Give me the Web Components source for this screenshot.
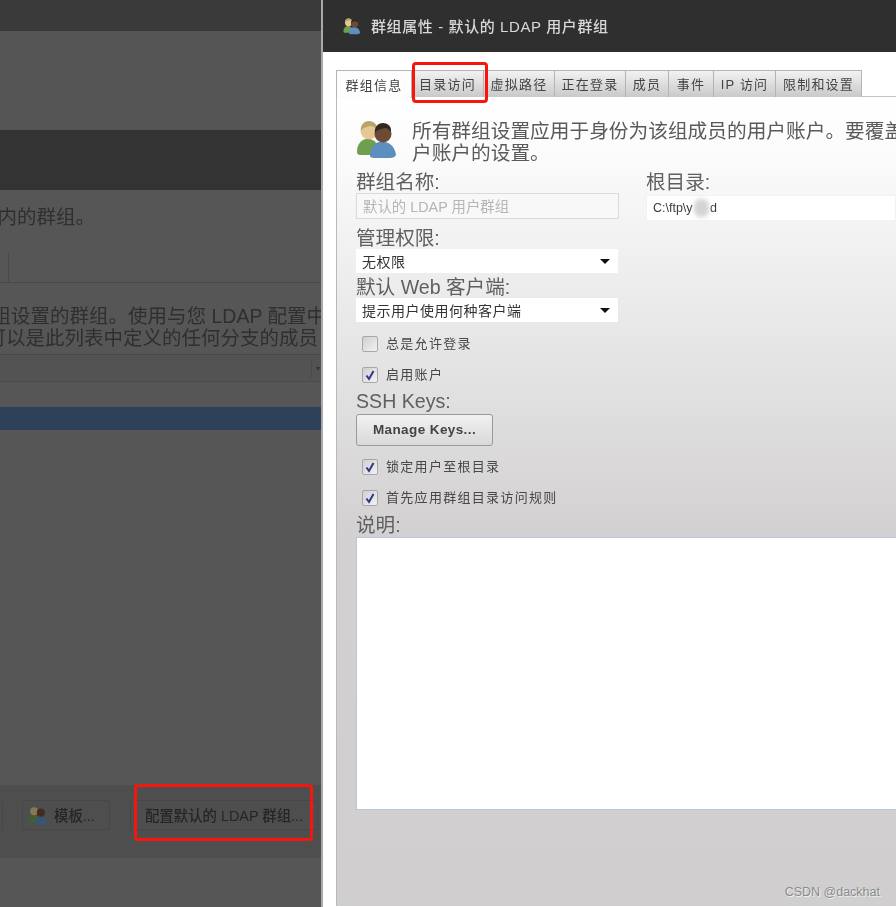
<!DOCTYPE html>
<html lang="zh"><head><meta charset="utf-8"><title>群组属性</title>
<style>
html,body{margin:0;padding:0;width:896px;height:907px;overflow:hidden;background:#555}
body{font-family:"Liberation Sans","Noto Sans CJK SC",sans-serif}
</style></head><body>
<app-shell></app-shell>
<script>
const FONT='"Liberation Sans","Noto Sans CJK SC",sans-serif';
function def(name,html){
  customElements.define(name,class extends HTMLElement{
    connectedCallback(){
      if(this.shadowRoot)return;
      const r=this.attachShadow({mode:'open'});
      r.innerHTML=typeof html==='function'?html(this):html;
    }
  });
}
const people=`<svg viewBox="0 0 42 38" width="100%" height="100%" style="display:block">
<path d="M1 32c0-8 4-12 9-13l4 0c4 1 6 3 7 6l-3 10H5c-3 0-4-1-4-3z" fill="#6f9e4e"/>
<circle cx="13" cy="11" r="8.5" fill="#e6c796"/><path d="M5 11c-1-7 4-10 8-10s9 3 8 9c-2-3-4-4-7-4-3 1-7 1-9 5z" fill="#b9a56a"/>
<path d="M14 36c0-8 4-13 9-14h6c6 1 10 6 11 13-1 2-3 3-6 3H18c-2 0-4-1-4-2z" fill="#5c8fbf"/>
<circle cx="27" cy="14" r="8.5" fill="#6d4a33"/><path d="M19 13c-1-7 4-10 8-10s9 3 8 9c-2-2-3-4-6-4-3 1-8 1-10 5z" fill="#33281f"/>
</svg>`;

def('dim-bar',h=>`<style>:host{display:block;height:${h.getAttribute('h')}px;background:${h.getAttribute('c')}}</style>`);

def('dim-text',h=>`<style>
:host{display:flex;justify-content:flex-end;height:${h.getAttribute('h')||22}px;line-height:${h.getAttribute('h')||22}px;padding-right:${h.getAttribute('pr')||0}px;overflow:hidden;white-space:nowrap;font-size:19.5px;color:#2f2f2f;font-family:${FONT}}
span{filter:blur(.6px);flex:none;margin-right:${h.getAttribute('mr')||0}px}
</style><span><slot></slot></span>`);

def('dim-button',h=>`<style>
:host{display:flex;align-items:center;justify-content:${h.hasAttribute('start')?'flex-start':'center'};gap:6px;box-sizing:border-box;width:${h.getAttribute('w')}px;height:30px;padding-left:${h.hasAttribute('start')?5:0}px;border:1px solid #474747;border-radius:3px;font-size:14.4px;font-weight:500;color:#252525;white-space:nowrap;font-family:${FONT}}
span{filter:blur(.6px);margin-top:-2px}
</style><slot name="icon"></slot><span><slot></slot></span>`);

def('left-pane',`<style>
:host{display:flex;flex-direction:column;width:321px;height:907px;background:#565656;overflow:hidden;flex:none}
.tabline{height:30px;display:flex;border-bottom:1px solid #484848;box-sizing:border-box}
.tabline i{display:block;width:8px;height:100%;border-right:1px solid #484848}
.sp{height:var(--h);flex:none}
.bar{display:flex;align-items:center;height:73px;background:#4e4e4e;padding-bottom:13px;box-sizing:border-box;flex:none}
.bar dim-button:first-child{margin-left:-60px;margin-right:19px}
.bar dim-button:nth-child(3){margin-left:20px}
.sel{height:26px;display:flex;justify-content:flex-end;align-items:center;border-top:1px solid #484848;border-bottom:1px solid #4c4c4c;background:#535353;font-size:8px;color:#333;padding-right:1px;flex:none}
.sel span{border-left:1px solid #4a4a4a;padding:5px 0 5px 4px}
</style>
<dim-bar h="31" c="#3a3a3a"></dim-bar>
<dim-bar h="99" c="#555555"></dim-bar>
<dim-bar h="60" c="#333333"></dim-bar>
<div class="sp" style="--h:15px"></div>
<dim-text h="24" pr="226">内的群组。</dim-text>
<div class="sp" style="--h:24px"></div>
<div class="tabline"><i></i></div>
<div class="sp" style="--h:22px"></div>
<dim-text h="22" mr="-5">组设置的群组。使用与您 LDAP 配置中</dim-text>
<dim-text h="22" mr="3">可以是此列表中定义的任何分支的成员</dim-text>
<div class="sp" style="--h:5px"></div>
<div class="sel"><span>▾</span></div>
<div class="sp" style="--h:25px"></div>
<dim-bar h="23" c="#2d4159"></dim-bar>
<div class="sp" style="--h:355px"></div>
<div class="bar">
  <dim-button w="63"></dim-button>
  <dim-button w="88" start><svg slot="icon" width="20" height="18" viewBox="0 0 42 38" style="filter:blur(.5px) brightness(.6)"><path d="M1 32c0-8 4-12 9-13h4c4 1 6 3 7 6l-3 10H5z" fill="#6f9e4e"/><circle cx="13" cy="11" r="8.5" fill="#e6c796"/><path d="M14 36c0-8 4-13 9-14h6c6 1 10 6 11 13l-6 3H18z" fill="#5c8fbf"/><circle cx="27" cy="14" r="8.5" fill="#6d4a33"/></svg>模板...</dim-button>
  <dim-button w="188">配置默认的 LDAP 群组...</dim-button>
</div>`);

def('dialog-title',`<style>
:host{display:flex;align-items:center;gap:10px;height:52px;background:#2f2f2f;padding-left:20px;color:#d8d8d8;font-size:15px;font-weight:500;font-family:${FONT};flex:none}
.i{width:18px;height:18px;display:block}
span{filter:blur(.5px);white-space:nowrap;letter-spacing:.6px;margin-top:-2px}
</style><div class="i">${people}</div><span><slot></slot></span>`);

def('tab-item',h=>`<style>
:host{display:flex;align-items:center;justify-content:center;box-sizing:border-box;width:${h.getAttribute('w')}px;height:27px;font-size:13px;letter-spacing:1.2px;color:#444;white-space:nowrap;border:1px solid #b4b4b4;border-bottom:0;border-left:0;background:linear-gradient(#f2f2f2,#c9c9c9);font-family:${FONT}}
:host([first]){border-left:1px solid #b4b4b4;background:#fdfdfd;height:28px;margin-bottom:-1px;position:relative;z-index:1}
span{filter:blur(.55px);margin-top:-1px}
</style><span><slot></slot></span>`);

def('tab-strip',`<style>:host{display:flex;height:27px;align-items:flex-start}</style><slot></slot>`);

def('field-label',`<style>
:host{display:flex;align-items:center;height:var(--lh,24px);font-size:19.6px;color:#606060;white-space:nowrap;font-family:${FONT}}
span{filter:blur(.5px);margin-top:var(--lm,-1px)}
</style><span><slot></slot></span>`);

def('text-box',h=>`<style>
:host{display:flex;align-items:center;box-sizing:border-box;height:${h.getAttribute('h')||26}px;padding-left:${h.getAttribute('pl')||6}px;background:${h.hasAttribute('disabled')?'#f8f8f8':'#fff'};border:1px solid ${h.hasAttribute('disabled')?'#dadada':'#f2f2f2'};font-size:14.4px;color:${h.hasAttribute('disabled')?'#b6b6b6':'#3c3c3c'};white-space:nowrap;font-family:${FONT};position:relative;overflow:hidden}
span{filter:blur(.5px);margin-top:-1px}
</style><span><slot></slot></span><slot name="over"></slot>`);

def('select-box',`<style>
:host{display:flex;align-items:center;justify-content:space-between;box-sizing:border-box;height:24px;padding:0 8px 0 6px;background:#fff;font-size:14px;letter-spacing:.5px;color:#333;white-space:nowrap;font-family:${FONT}}
span{filter:blur(.5px);margin-top:-1px}
i{display:block;width:0;height:0;border:5px solid transparent;border-top:5px solid #111;border-bottom:0}
</style><span><slot></slot></span><i></i>`);

def('check-row',h=>`<style>
:host{display:flex;align-items:center;gap:8px;height:31px;padding-left:6px;font-size:13px;letter-spacing:1.3px;color:#484848;white-space:nowrap;font-family:${FONT}}
.b{box-sizing:border-box;width:16px;height:16px;border:1px solid #a8a8a8;border-radius:2px;background:linear-gradient(135deg,#cfcfcf,#f3f3f3);display:block;filter:blur(.3px);flex:none}
span{filter:blur(.55px);margin-top:-2px}
svg{display:block}
</style><div class="b">${h.hasAttribute('checked')?'<svg viewBox="0 0 14 14" width="14" height="14"><path d="M3.5 7.5 6 11 10.5 3" fill="none" stroke="#33338f" stroke-width="2"/></svg>':''}</div><span><slot></slot></span>`);

def('push-button',`<style>
:host{display:flex;align-items:center;justify-content:center;box-sizing:border-box;width:137px;height:32px;border:1px solid #9a9a9a;border-radius:3px;background:linear-gradient(#f1f1f1,#d9d9d9);font-size:13.5px;font-weight:bold;letter-spacing:.4px;color:#444;font-family:${FONT}}
span{filter:blur(.5px);margin-top:-2px}
</style><span><slot></slot></span>`);

def('group-panel',`<style>
:host{display:block;box-sizing:border-box;height:810px;margin-top:-1px;padding:23px 0 0 19px;border-left:1px solid #b9b9b9;border-top:1px solid #c4c4c4;width:560px;background:linear-gradient(#ffffff 0,#fbfbfb 60px,#d2d0d0 440px,#d0cece 100%);overflow:hidden;font-family:${FONT}}
.intro{display:flex;height:44px;width:600px}
.ico{width:42px;height:38px;margin-right:14px;flex:none;filter:blur(.4px)}
.txt{font-size:19.7px;line-height:22px;color:#5a5a5a;white-space:nowrap;filter:blur(.45px)}
.two{display:flex;margin-top:5px}
.c1{width:263px;flex:none}.c2{margin-left:27px;width:300px}
.left{width:262px}
.sub{--lh:25px}
.ssh{--lh:24px}
.after{margin-top:5px}
.note{--lm:-3px}
.area{box-sizing:border-box;height:273px;width:600px;background:#fff;border:1px solid #b7c7da}
.smudge{position:absolute;left:47px;top:3px;width:15px;height:18px;background:#d4d4d4;border-radius:40%;filter:blur(2px)}
.chk1{margin-top:6px}
</style>
<div class="intro"><div class="ico">${people}</div><div class="txt">所有群组设置应用于身份为该组成员的用户账户。要覆盖<br>户账户的设置。</div></div>
<div class="two">
  <div class="c1"><field-label>群组名称:</field-label><text-box disabled>默认的 LDAP 用户群组</text-box></div>
  <div class="c2" style="margin-bottom:-2px"><field-label>根目录:</field-label><text-box style="margin-top:2px;font-size:12.5px">C:\\ftp\\y&nbsp;&nbsp;&nbsp;&nbsp;&nbsp;d<div slot="over" class="smudge"></div></text-box></div>
</div>
<div class="left">
  <field-label style="margin-top:6px">管理权限:</field-label>
  <select-box>无权限</select-box>
  <field-label class="sub">默认 Web 客户端:</field-label>
  <select-box>提示用户使用何种客户端</select-box>
  <check-row class="chk1">总是允许登录</check-row>
  <check-row checked>启用账户</check-row>
  <field-label class="ssh">SSH Keys:</field-label>
  <push-button>Manage Keys...</push-button>
  <check-row checked class="after">锁定用户至根目录</check-row>
  <check-row checked>首先应用群组目录访问规则</check-row>
  <field-label class="note">说明:</field-label>
</div>
<div class="area"></div>`);

def('group-dialog',`<style>
:host{display:flex;flex-direction:column;flex:1;min-width:0;height:907px;background:#fff;border-left:2px solid #a9a9a9;box-sizing:border-box;overflow:hidden}
.body{padding:18px 0 0 13px}
</style>
<dialog-title>群组属性 - 默认的 LDAP 用户群组</dialog-title>
<div class="body">
<tab-strip>
  <tab-item first w="76">群组信息</tab-item><tab-item w="72">目录访问</tab-item><tab-item w="71">虚拟路径</tab-item><tab-item w="71">正在登录</tab-item><tab-item w="43">成员</tab-item><tab-item w="45">事件</tab-item><tab-item w="62">IP 访问</tab-item><tab-item w="86">限制和设置</tab-item>
</tab-strip>
<group-panel></group-panel>
</div>`);

def('red-box',h=>`<style>:host{position:absolute;left:${h.getAttribute('x')}px;top:${h.getAttribute('y')}px;width:${h.getAttribute('w')}px;height:${h.getAttribute('h')}px;box-sizing:border-box;border:3px solid #f5170d;border-radius:4px;pointer-events:none}</style>`);

def('water-mark',`<style>:host{position:absolute;right:16px;bottom:8px;font-size:12.5px;color:#8c8c8c;text-shadow:1px 1px 0 #eee;white-space:nowrap;font-family:${FONT}}</style><slot></slot>`);

def('app-shell',`<style>:host{display:flex;position:relative;width:896px;height:907px;overflow:hidden}</style>
<left-pane></left-pane><group-dialog></group-dialog>
<red-box x="412" y="62" w="76" h="41"></red-box>
<red-box x="134" y="784" w="179" h="57"></red-box>
<water-mark>CSDN @dackhat</water-mark>`);
</script>
</body></html>
